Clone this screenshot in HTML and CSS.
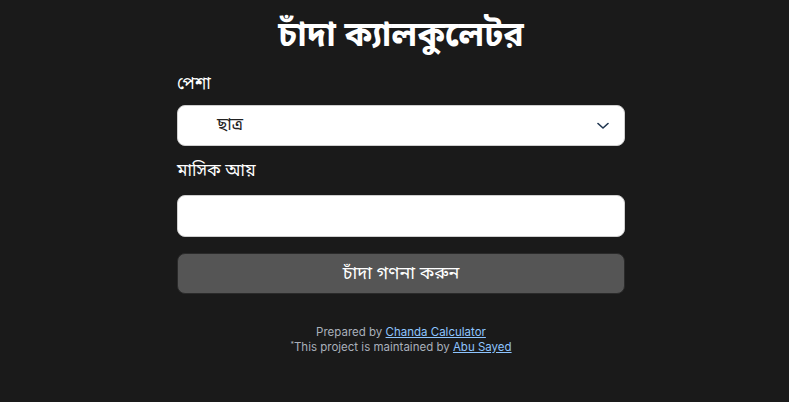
FILE: index.html
```html
<!DOCTYPE html>
<html lang="bn">
<head>
<meta charset="utf-8">
<title>চাঁদা ক্যালকুলেটর</title>
<link rel="stylesheet" href="styles.css">
</head>
<body>
<div class="page">
  <main class="card">
    <h1 class="title">চাঁদা ক্যালকুলেটর</h1>
    <form class="form">
      <label class="label">পেশা</label>
      <div class="select">
        <span class="select-value">ছাত্র</span>
        <svg class="chevron" width="12" height="8" viewBox="0 0 12 8"><polyline points="1,1.5 6,6 11,1.5" fill="none" stroke="#1f3550" stroke-width="1.6" stroke-linecap="round" stroke-linejoin="round"/></svg>
      </div>
      <label class="label label-2">মাসিক আয়</label>
      <div class="input"></div>
      <div class="button">চাঁদা গণনা করুন</div>
    </form>
    <footer class="footer">
      <p>Prepared by <a href="#">Chanda Calculator</a></p>
      <p><sup>*</sup>This project is maintained by <a href="#">Abu Sayed</a></p>
    </footer>
  </main>
</div>
</body>
</html>
```
FILE: styles.css
```css
html, body {
  margin: 0;
  padding: 0;
  background: #1a1a1a;
}
body {
  font-family: "Noto Sans Bengali", "Noto Sans", "Liberation Sans", sans-serif;
  color: #ffffff;
}
.page {
  padding-left: 13px;
  display: flex;
  justify-content: center;
}
.card {
  width: 448px;
  display: flex;
  flex-direction: column;
}
.title {
  margin: 14px 0 0;
  text-align: center;
  font-size: 34px;
  font-weight: 700;
  line-height: 48px;
}
.form {
  display: flex;
  flex-direction: column;
  margin-top: 11px;
}
.label {
  font-size: 17px;
  line-height: 24px;
  color: #ffffff;
}
.label-2 {
  margin-top: 14px;
}
.select {
  margin-top: 8px;
  height: 41px;
  box-sizing: border-box;
  background: #ffffff;
  border: 1px solid #cfcfcf;
  border-radius: 8px;
  display: flex;
  align-items: center;
  padding: 0 15px 0 39px;
}
.select-value {
  flex: 1;
  color: #222;
  font-size: 17px;
}
.chevron {
  display: block;
}
.input {
  margin-top: 11px;
  height: 42px;
  box-sizing: border-box;
  background: #ffffff;
  border: 1px solid #cfcfcf;
  border-radius: 8px;
}
.button {
  margin-top: 16px;
  height: 41px;
  box-sizing: border-box;
  background: #555555;
  border: 1px solid #2a2a2a;
  border-radius: 8px;
  display: flex;
  align-items: center;
  justify-content: center;
  font-size: 18px;
  color: #ffffff;
}
.footer {
  margin-top: 31px;
  text-align: center;
  font-family: Inter, "Liberation Sans", sans-serif;
  font-size: 11.5px;
  line-height: 15px;
  color: #a9b0ba;
}
.footer p {
  margin: 0;
}
.footer a {
  color: #8ec5ff;
  text-decoration: underline;
}
.footer sup {
  font-size: 7px;
  vertical-align: 4px;
  line-height: 0;
}
```
